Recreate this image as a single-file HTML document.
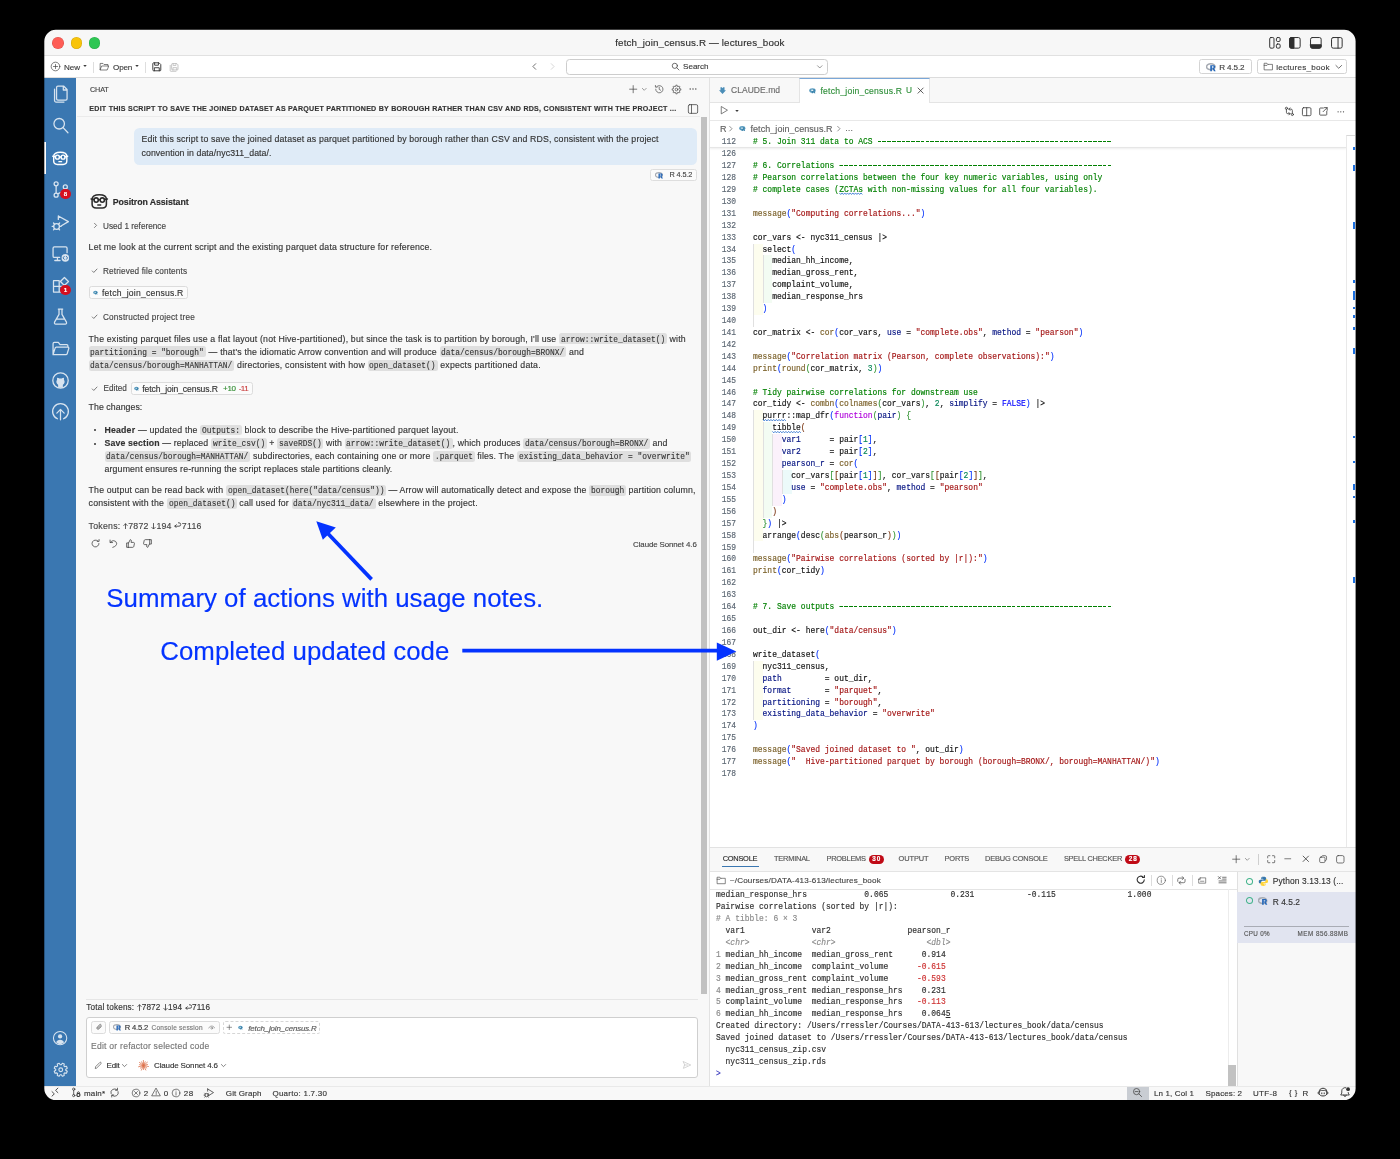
<!DOCTYPE html><html><head><meta charset="utf-8"><title>Positron</title><style>

html,body{margin:0;padding:0;background:#000;}
body{width:1400px;height:1159px;position:relative;overflow:hidden;font-family:"Liberation Sans",sans-serif;}
#w{position:absolute;left:0;top:0;width:1400px;height:1159px;overflow:hidden;will-change:transform;}
#w>div,#w>svg,#w>span,#w>pre{position:absolute;}
.t{white-space:pre;display:block;-webkit-text-stroke:0.14px currentColor;}
b{font-weight:700}
.c{background:#dfdfdf;border-radius:2.5px;font-size:6.5px;padding:2.2px 1.8px 1.7px 1.8px;}
.ci{display:inline-block;font:400 9.3px/9.6px "Liberation Mono",monospace;color:#333;letter-spacing:0;transform:scaleX(.85);transform-origin:0 50%;-webkit-text-stroke:0.12px currentColor;}
pre{margin:0;font:400 9.6px/11.92px "Liberation Mono",monospace;color:#111;white-space:pre;transform:scaleX(.8311);transform-origin:0 0;-webkit-text-stroke:0.17px currentColor;}
.dash{display:inline-block;height:0.95px;vertical-align:2.55px;background:repeating-linear-gradient(90deg,#008000 0,#008000 4.45px,transparent 4.45px,transparent 5.76px);}
.k{color:#008000}.s{color:#a31515}.f{color:#795e26}.v{color:#001080}.n{color:#098658}.b1{color:#0431fa}.b2{color:#319331}.b3{color:#7b3814}.kw{color:#af00db}.cn{color:#0000ff}
.g{color:#8a8a8a}.r{color:#cd3131}

</style></head><body><div id="w">
<div style="left:44px;top:29px;width:1312px;height:1072px;background:#f7f7f7;"></div>
<div style="left:44px;top:29px;width:1312px;height:27px;background:#f7f7f7;border-bottom:1px solid #e1e1e1;box-sizing:border-box;"></div>
<div style="left:52.300000000000004px;top:37.15px;width:11.6px;height:11.6px;background:#fe5d56;border-radius:50%;box-shadow:inset 0 0 0 0.6px rgba(0,0,0,0.13);"></div>
<div style="left:70.5px;top:37.15px;width:11.6px;height:11.6px;background:#f8c40a;border-radius:50%;box-shadow:inset 0 0 0 0.6px rgba(0,0,0,0.13);"></div>
<div style="left:88.8px;top:37.15px;width:11.6px;height:11.6px;background:#2dc653;border-radius:50%;box-shadow:inset 0 0 0 0.6px rgba(0,0,0,0.13);"></div>
<div style="left:44px;top:56px;width:1312px;height:22px;background:#ffffff;border-bottom:1px solid #dcdcdc;box-sizing:border-box;"></div>
<div style="left:44px;top:77.6px;width:32.3px;height:1009px;background:#3a77b1;"></div>
<div style="left:44.3px;top:142px;width:1.3px;height:31.5px;background:#ffffff;"></div>
<div style="left:76.3px;top:77.6px;width:633.7px;height:1009px;background:#f8f8f8;"></div>
<div style="left:700.6px;top:117.2px;width:6.5px;height:877px;background:#c1c1c1;"></div>
<div style="left:709px;top:78px;width:1px;height:1008px;background:#e2e2e2;"></div>
<div style="left:710px;top:78px;width:645.7px;height:770px;background:#ffffff;"></div>
<div style="left:710px;top:78px;width:645.7px;height:24.9px;background:#f8f8f8;border-bottom:1px solid #e4e4e4;box-sizing:border-box;"></div>
<div style="left:799.4px;top:78px;width:130.6px;height:24.9px;background:#ffffff;border-top:1.4px solid #7aa7d8;border-left:1px solid #e4e4e4;border-right:1px solid #e4e4e4;box-sizing:border-box;"></div>
<div style="left:710px;top:120px;width:645.7px;height:1px;background:#e8e8e8;"></div>
<div style="left:710px;top:147px;width:636px;height:1px;background:#e6e6e6;box-shadow:0 1px 2px rgba(0,0,0,.10);"></div>
<div style="left:1346px;top:135px;width:9px;height:712px;background:#ffffff;border-left:1px solid #e9e9e9;border-top:1px solid #d8d8d8;box-sizing:border-box;"></div>
<div style="left:1352.6px;top:147px;width:2.4px;height:3px;background:#1a6fe0;"></div>
<div style="left:1352.6px;top:164.7px;width:2.4px;height:6.3px;background:#1a6fe0;"></div>
<div style="left:1352.6px;top:221.9px;width:2.4px;height:6.8px;background:#1a6fe0;"></div>
<div style="left:1352.6px;top:280px;width:2.4px;height:2.5px;background:#1a6fe0;"></div>
<div style="left:1352.6px;top:290.8px;width:2.4px;height:9.2px;background:#1a6fe0;"></div>
<div style="left:1352.6px;top:306.8px;width:2.4px;height:2.5px;background:#1a6fe0;"></div>
<div style="left:1352.6px;top:315.2px;width:2.4px;height:2.5px;background:#1a6fe0;"></div>
<div style="left:1352.6px;top:327.3px;width:2.4px;height:2.5px;background:#1a6fe0;"></div>
<div style="left:1352.6px;top:347.6px;width:2.4px;height:6.4px;background:#1a6fe0;"></div>
<div style="left:1352.6px;top:435.8px;width:2.4px;height:2.5px;background:#1a6fe0;"></div>
<div style="left:1352.6px;top:460.5px;width:2.4px;height:2.5px;background:#1a6fe0;"></div>
<div style="left:1352.6px;top:484px;width:2.4px;height:6.4px;background:#1a6fe0;"></div>
<div style="left:1352.6px;top:495.5px;width:2.4px;height:2.5px;background:#1a6fe0;"></div>
<div style="left:1352.6px;top:520.3px;width:2.4px;height:2.5px;background:#1a6fe0;"></div>
<div style="left:1352.6px;top:577px;width:2.4px;height:6.4px;background:#1a6fe0;"></div>
<div style="left:710px;top:847px;width:645.7px;height:239px;background:#ffffff;border-top:1px solid #e2e2e2;box-sizing:border-box;"></div>
<div style="left:710px;top:848px;width:645.7px;height:24px;background:#f8f8f8;border-bottom:1px solid #e4e4e4;box-sizing:border-box;"></div>
<div style="left:710px;top:888.5px;width:527px;height:1px;background:#e4e4e4;"></div>
<div style="left:1236.5px;top:872px;width:119.2px;height:214px;background:#f8f8f8;border-left:1px solid #e0e0e0;box-sizing:border-box;"></div>
<div style="left:1236.6px;top:891.7px;width:119.1px;height:51px;background:#e1e4f0;"></div>
<div style="left:1227.5px;top:889px;width:1px;height:197px;background:#ececec;"></div>
<div style="left:1228.3px;top:1065px;width:7.6px;height:20.5px;background:#c2c2c2;"></div>
<div style="left:44px;top:1085.5px;width:1312px;height:15.5px;background:#f8f8f8;border-top:1px solid #e9e9e9;box-sizing:border-box;"></div>
<div style="left:1127.2px;top:1086.5px;width:21.5px;height:13.5px;background:#c9cdd3;"></div>
<span class="t" style="left:615.2px;top:36.34px;font:400 9.8px/13.72px 'Liberation Sans',sans-serif;color:#2e2e2e;letter-spacing:0.142px;">fetch_join_census.R — lectures_book</span>
<span class="t" style="left:64px;top:61.83px;font:400 8.1px/11.34px 'Liberation Sans',sans-serif;color:#3b3b3b;letter-spacing:-0.1px;">New</span>
<span class="t" style="left:113px;top:61.83px;font:400 8.1px/11.34px 'Liberation Sans',sans-serif;color:#3b3b3b;letter-spacing:-0.17px;">Open</span>
<div style="left:566.3px;top:59px;width:261.4px;height:16.3px;background:#ffffff;border:1px solid #cdcdcd;border-radius:3.5px;box-sizing:border-box;"></div>
<span class="t" style="left:683px;top:61.23px;font:400 8.1px/11.34px 'Liberation Sans',sans-serif;color:#3b3b3b;letter-spacing:-0.012px;">Search</span>
<div style="left:1199.3px;top:59.3px;width:52.5px;height:15px;background:#ffffff;border:1px solid #d4d4d4;border-radius:2.5px;box-sizing:border-box;"></div>
<div style="left:1257.3px;top:59.3px;width:89.5px;height:15px;background:#ffffff;border:1px solid #d4d4d4;border-radius:2.5px;box-sizing:border-box;"></div>
<span class="t" style="left:1219.3px;top:61.93px;font:400 8.1px/11.34px 'Liberation Sans',sans-serif;color:#3b3b3b;letter-spacing:-0.152px;">R 4.5.2</span>
<span class="t" style="left:1276.3px;top:61.93px;font:400 8.1px/11.34px 'Liberation Sans',sans-serif;color:#3b3b3b;letter-spacing:0.234px;">lectures_book</span>
<div style="left:93.2px;top:61.5px;width:1px;height:11px;background:#dedede;"></div>
<div style="left:145.4px;top:61.5px;width:1px;height:11px;background:#dedede;"></div>
<span class="t" style="left:90px;top:84.56px;font:400 7.2px/10.08px 'Liberation Sans',sans-serif;color:#444;letter-spacing:-0.113px;">CHAT</span>
<span class="t" style="left:89.3px;top:104.93px;font:700 7.1px/9.94px 'Liberation Sans',sans-serif;color:#333;letter-spacing:0.247px;">EDIT THIS SCRIPT TO SAVE THE JOINED DATASET AS PARQUET PARTITIONED BY BOROUGH RATHER THAN CSV AND RDS, CONSISTENT WITH THE PROJECT ...</span>
<div style="left:77px;top:116.3px;width:623px;height:1px;background:#ebebeb;"></div>
<div style="left:133.8px;top:128px;width:562.8px;height:36.6px;background:#dfebf7;border-radius:5.5px;"></div>
<span class="t" style="left:141.5px;top:133.47px;font:400 8.75px/12.25px 'Liberation Sans',sans-serif;color:#333;letter-spacing:0.143px;">Edit this script to save the joined dataset as parquet partitioned by borough rather than CSV and RDS, consistent with the project</span>
<span class="t" style="left:141.5px;top:146.68px;font:400 8.75px/12.25px 'Liberation Sans',sans-serif;color:#333;letter-spacing:0.071px;">convention in data/nyc311_data/.</span>
<div style="left:650.3px;top:168.5px;width:46.4px;height:12.8px;background:#fbfbfb;border:1px solid #dedede;border-radius:2.5px;box-sizing:border-box;"></div>
<span class="t" style="left:669.5px;top:169.89px;font:400 7.3px/10.22px 'Liberation Sans',sans-serif;color:#444;letter-spacing:-0.124px;">R 4.5.2</span>
<span class="t" style="left:112.8px;top:195.84px;font:700 8.8px/12.32px 'Liberation Sans',sans-serif;color:#2b2b2b;letter-spacing:-0.094px;">Positron Assistant</span>
<span class="t" style="left:103px;top:221.16px;font:400 8.2px/11.48px 'Liberation Sans',sans-serif;color:#444;letter-spacing:0.013px;">Used 1 reference</span>
<span class="t" style="left:88.6px;top:240.88px;font:400 8.75px/12.25px 'Liberation Sans',sans-serif;color:#333;letter-spacing:0.168px;">Let me look at the current script and the existing parquet data structure for reference.</span>
<span class="t" style="left:103px;top:265.86px;font:400 8.2px/11.48px 'Liberation Sans',sans-serif;color:#444;letter-spacing:0.136px;">Retrieved file contents</span>
<div style="left:89px;top:286px;width:99.3px;height:12.8px;background:#fbfbfb;border:1px solid #dcdcdc;border-radius:2.5px;box-sizing:border-box;"></div>
<span class="t" style="left:102px;top:286.58px;font:400 8.6px/12.04px 'Liberation Sans',sans-serif;color:#333;letter-spacing:0.211px;">fetch_join_census.R</span>
<span class="t" style="left:103px;top:311.86px;font:400 8.2px/11.48px 'Liberation Sans',sans-serif;color:#444;letter-spacing:0.192px;">Constructed project tree</span>
<span class="t" style="left:88.6px;top:332.68px;font:400 8.75px/12.25px 'Liberation Sans',sans-serif;color:#333;letter-spacing:0.178px;">The existing parquet files use a flat layout (not Hive-partitioned), but since the task is to partition by borough, I'll use <span class="c"><span class="ci" style="margin-right:-18.41px">arrow::write_dataset()</span></span> with</span>
<span class="t" style="left:88.6px;top:345.57px;font:400 8.75px/12.25px 'Liberation Sans',sans-serif;color:#333;letter-spacing:0.173px;"><span class="c"><span class="ci" style="margin-right:-20.09px">partitioning = &quot;borough&quot;</span></span> — that's the idiomatic Arrow convention and will produce <span class="c"><span class="ci" style="margin-right:-21.76px">data/census/borough=BRONX/</span></span> and</span>
<span class="t" style="left:88.6px;top:358.98px;font:400 8.75px/12.25px 'Liberation Sans',sans-serif;color:#333;letter-spacing:0.211px;"><span class="c"><span class="ci" style="margin-right:-25.11px">data/census/borough=MANHATTAN/</span></span> directories, consistent with how <span class="c"><span class="ci" style="margin-right:-11.72px">open_dataset()</span></span> expects partitioned data.</span>
<span class="t" style="left:103.5px;top:383.36px;font:400 8.2px/11.48px 'Liberation Sans',sans-serif;color:#444;letter-spacing:0.036px;">Edited</span>
<div style="left:130.5px;top:382.3px;width:122.1px;height:12.3px;background:#fbfbfb;border:1px solid #dcdcdc;border-radius:2.5px;box-sizing:border-box;"></div>
<span class="t" style="left:142.3px;top:382.88px;font:400 8.6px/12.04px 'Liberation Sans',sans-serif;color:#333;letter-spacing:-0.094px;">fetch_join_census.R</span>
<span class="t" style="left:223px;top:383.3px;font:400 8.0px/11.2px 'Liberation Sans',sans-serif;color:#2e8b2e;letter-spacing:-0.291px;">+10</span>
<span class="t" style="left:238.7px;top:383.3px;font:400 8.0px/11.2px 'Liberation Sans',sans-serif;color:#c93b3b;letter-spacing:-0.485px;">-11</span>
<span class="t" style="left:88.6px;top:400.77px;font:400 8.75px/12.25px 'Liberation Sans',sans-serif;color:#333;letter-spacing:0.061px;">The changes:</span>
<div style="left:94.2px;top:429.2px;width:2.2px;height:2.2px;background:#333;border-radius:50%;"></div>
<div style="left:94.2px;top:442.6px;width:2.2px;height:2.2px;background:#333;border-radius:50%;"></div>
<span class="t" style="left:104.5px;top:423.77px;font:400 8.75px/12.25px 'Liberation Sans',sans-serif;color:#333;letter-spacing:0.182px;"><b>Header</b> — updated the <span class="c"><span class="ci" style="margin-right:-6.7px">Outputs:</span></span> block to describe the Hive-partitioned parquet layout.</span>
<span class="t" style="left:104.5px;top:437.07px;font:400 8.75px/12.25px 'Liberation Sans',sans-serif;color:#333;letter-spacing:0.139px;"><b>Save section</b> — replaced <span class="c"><span class="ci" style="margin-right:-9.21px">write_csv()</span></span> + <span class="c"><span class="ci" style="margin-right:-7.53px">saveRDS()</span></span> with <span class="c"><span class="ci" style="margin-right:-18.41px">arrow::write_dataset()</span></span>, which produces <span class="c"><span class="ci" style="margin-right:-21.76px">data/census/borough=BRONX/</span></span> and</span>
<span class="t" style="left:104.5px;top:449.98px;font:400 8.75px/12.25px 'Liberation Sans',sans-serif;color:#333;letter-spacing:0.168px;"><span class="c"><span class="ci" style="margin-right:-25.11px">data/census/borough=MANHATTAN/</span></span> subdirectories, each containing one or more <span class="c"><span class="ci" style="margin-right:-6.7px">.parquet</span></span> files. The <span class="c"><span class="ci" style="margin-right:-30.13px">existing_data_behavior = &quot;overwrite&quot;</span></span></span>
<span class="t" style="left:104.5px;top:462.88px;font:400 8.75px/12.25px 'Liberation Sans',sans-serif;color:#333;letter-spacing:0.156px;">argument ensures re-running the script replaces stale partitions cleanly.</span>
<span class="t" style="left:88.6px;top:484.18px;font:400 8.75px/12.25px 'Liberation Sans',sans-serif;color:#333;letter-spacing:0.164px;">The output can be read back with <span class="c"><span class="ci" style="margin-right:-27.62px">open_dataset(here(&quot;data/census&quot;))</span></span> — Arrow will automatically detect and expose the <span class="c"><span class="ci" style="margin-right:-5.86px">borough</span></span> partition column,</span>
<span class="t" style="left:88.6px;top:496.98px;font:400 8.75px/12.25px 'Liberation Sans',sans-serif;color:#333;letter-spacing:0.185px;">consistent with the <span class="c"><span class="ci" style="margin-right:-11.72px">open_dataset()</span></span> call used for <span class="c"><span class="ci" style="margin-right:-14.23px">data/nyc311_data/</span></span> elsewhere in the project.</span>
<span class="t" style="left:88.6px;top:519.88px;font:400 8.75px/12.25px 'Liberation Sans',sans-serif;color:#444;letter-spacing:0.252px;">Tokens: <svg width="5" height="6.8" viewBox="0 0 5 7.6" style="vertical-align:-0.5px"><path d="M2.5 7.2V0.9M0.6 2.800L2.500 0.900 4.400 2.800" stroke="#3a3a3a" stroke-width="0.9" fill="none" stroke-linecap="round" stroke-linejoin="round"/></svg>7872 <svg width="5" height="6.8" viewBox="0 0 5 7.6" style="vertical-align:-0.5px"><path d="M2.5 0.500V6.800M0.600 4.900L2.500 6.800 4.400 4.900" stroke="#3a3a3a" stroke-width="0.9" fill="none" stroke-linecap="round" stroke-linejoin="round"/></svg>194 <svg width="7.4" height="6" viewBox="0 0 7.4 6" style="vertical-align:0.6px"><path d="M0.800 4.200H5a1.700 1.700 0 0 0 0-3.400H4.400M2.300 2.700L0.800 4.200 2.300 5.600" stroke="#3a3a3a" stroke-width="0.85" fill="none" stroke-linecap="round" stroke-linejoin="round"/></svg>7116</span>
<span class="t" style="right:703.3px;top:538.77px;font:400 7.9px/11.06px 'Liberation Sans',sans-serif;color:#444;letter-spacing:-0.105px;">Claude Sonnet 4.6</span>
<span class="t" style="left:106.3px;top:583.0px;font:400 25.85px/30px 'Liberation Sans',sans-serif;color:#0433ff;letter-spacing:0.009px;">Summary of actions with usage notes.</span>
<span class="t" style="left:160.3px;top:636.4px;font:400 25.85px/30px 'Liberation Sans',sans-serif;color:#0433ff;letter-spacing:0.009px;">Completed updated code</span>
<svg style="left:300px;top:510px;z-index:5" width="90" height="80" viewBox="300 510 90 80"><line x1="371.6" y1="579.4" x2="326" y2="531.5" stroke="#0433ff" stroke-width="3.7"/><polygon points="316.3,521.3 335.8,527.5 322.8,539.8" fill="#0433ff"/></svg>
<svg style="left:455px;top:635px;z-index:5" width="290" height="30" viewBox="455 635 290 30"><line x1="462.3" y1="650.6" x2="720" y2="650.6" stroke="#0433ff" stroke-width="3.7"/><polygon points="736.3,651.4 716.8,642.4 716.8,660.8" fill="#0433ff"/></svg>
<div style="left:86.3px;top:999.3px;width:612px;height:1px;background:#e6e6e6;"></div>
<span class="t" style="left:86.3px;top:1002.26px;font:400 8.2px/11.48px 'Liberation Sans',sans-serif;color:#333;letter-spacing:0.154px;">Total tokens: <svg width="5" height="6.8" viewBox="0 0 5 7.6" style="vertical-align:-0.5px"><path d="M2.5 7.2V0.9M0.6 2.800L2.500 0.900 4.400 2.800" stroke="#3a3a3a" stroke-width="0.9" fill="none" stroke-linecap="round" stroke-linejoin="round"/></svg>7872 <svg width="5" height="6.8" viewBox="0 0 5 7.6" style="vertical-align:-0.5px"><path d="M2.5 0.500V6.800M0.600 4.900L2.500 6.800 4.400 4.900" stroke="#3a3a3a" stroke-width="0.9" fill="none" stroke-linecap="round" stroke-linejoin="round"/></svg>194 <svg width="7.4" height="6" viewBox="0 0 7.4 6" style="vertical-align:0.6px"><path d="M0.800 4.200H5a1.700 1.700 0 0 0 0-3.400H4.400M2.300 2.700L0.800 4.200 2.300 5.600" stroke="#3a3a3a" stroke-width="0.85" fill="none" stroke-linecap="round" stroke-linejoin="round"/></svg>7116</span>
<div style="left:86.3px;top:1016.6px;width:612.2px;height:61px;background:#ffffff;border:1px solid #cfcfcf;border-radius:3px;box-sizing:border-box;"></div>
<div style="left:91px;top:1021px;width:15.2px;height:12.6px;background:#fbfbfb;border:1px solid #dcdcdc;border-radius:2.5px;box-sizing:border-box;"></div>
<div style="left:109.4px;top:1021px;width:110.3px;height:12.6px;background:#fbfbfb;border:1px solid #dcdcdc;border-radius:2.5px;box-sizing:border-box;"></div>
<div style="left:223.2px;top:1021px;width:97.2px;height:12.6px;background:#ffffff;border:1px dashed #d6d6d6;border-radius:2.5px;box-sizing:border-box;"></div>
<span class="t" style="left:124.7px;top:1022.58px;font:400 7.6px/10.64px 'Liberation Sans',sans-serif;color:#333;letter-spacing:-0.166px;">R 4.5.2</span>
<span class="t" style="left:151.5px;top:1022.85px;font:400 6.5px/9.1px 'Liberation Sans',sans-serif;color:#777;letter-spacing:0.236px;">Console session</span>
<span class="t" style="left:248.3px;top:1022.77px;font:400 7.9px/11.06px 'Liberation Sans',sans-serif;color:#555;letter-spacing:-0.142px;font-style:italic;">fetch_join_census.R</span>
<span class="t" style="left:91px;top:1040.28px;font:400 8.6px/12.04px 'Liberation Sans',sans-serif;color:#767676;letter-spacing:0.228px;">Edit or refactor selected code</span>
<span class="t" style="left:106.5px;top:1060.0px;font:400 8.0px/11.2px 'Liberation Sans',sans-serif;color:#333;letter-spacing:-0.199px;">Edit</span>
<span class="t" style="left:154px;top:1060.0px;font:400 8.0px/11.2px 'Liberation Sans',sans-serif;color:#333;letter-spacing:-0.143px;">Claude Sonnet 4.6</span>
<span class="t" style="left:84px;top:1087.7px;font:400 8.0px/11.2px 'Liberation Sans',sans-serif;color:#333;letter-spacing:0.136px;">main*</span>
<span class="t" style="left:143.8px;top:1087.7px;font:400 8.0px/11.2px 'Liberation Sans',sans-serif;color:#333;">2</span>
<span class="t" style="left:163.8px;top:1087.7px;font:400 8.0px/11.2px 'Liberation Sans',sans-serif;color:#333;">0</span>
<span class="t" style="left:183.7px;top:1087.7px;font:400 8.0px/11.2px 'Liberation Sans',sans-serif;color:#333;letter-spacing:0.699px;">28</span>
<span class="t" style="left:225.8px;top:1087.7px;font:400 8.0px/11.2px 'Liberation Sans',sans-serif;color:#333;letter-spacing:0.127px;">Git Graph</span>
<span class="t" style="left:272.4px;top:1087.7px;font:400 8.0px/11.2px 'Liberation Sans',sans-serif;color:#333;letter-spacing:0.265px;">Quarto: 1.7.30</span>
<span class="t" style="left:1153.9px;top:1087.7px;font:400 8.0px/11.2px 'Liberation Sans',sans-serif;color:#333;letter-spacing:0.14px;">Ln 1, Col 1</span>
<span class="t" style="left:1205.6px;top:1087.7px;font:400 8.0px/11.2px 'Liberation Sans',sans-serif;color:#333;letter-spacing:0.101px;">Spaces: 2</span>
<span class="t" style="left:1252.9px;top:1087.7px;font:400 8.0px/11.2px 'Liberation Sans',sans-serif;color:#333;letter-spacing:0.355px;">UTF-8</span>
<span class="t" style="left:1302.4px;top:1087.7px;font:400 8.0px/11.2px 'Liberation Sans',sans-serif;color:#333;">R</span>
<span class="t" style="left:731px;top:85.25px;font:400 8.5px/11.9px 'Liberation Sans',sans-serif;color:#6a6a6a;letter-spacing:0.043px;">CLAUDE.md</span>
<span class="t" style="left:820.5px;top:84.78px;font:400 8.6px/12.04px 'Liberation Sans',sans-serif;color:#2f8f3a;letter-spacing:0.228px;">fetch_join_census.R</span>
<span class="t" style="left:906.0px;top:85.19px;font:400 8.3px/11.62px 'Liberation Sans',sans-serif;color:#2f8f3a;">U</span>
<span class="t" style="left:720px;top:122.9px;font:400 9.0px/12.6px 'Liberation Sans',sans-serif;color:#616161;">R</span>
<span class="t" style="left:750.5px;top:122.8px;font:400 9.0px/12.6px 'Liberation Sans',sans-serif;color:#616161;letter-spacing:0.052px;">fetch_join_census.R</span>
<span class="t" style="left:845px;top:123.36px;font:400 8.2px/11.48px 'Liberation Sans',sans-serif;color:#616161;">…</span>
<div style="left:753.3px;top:243.5px;width:9.56px;height:71.52px;background:#fdfdee;"></div>
<div style="left:762.86px;top:255.42px;width:9.56px;height:47.68px;background:#f3fcf3;"></div>
<div style="left:753.3px;top:410.38px;width:9.56px;height:131.12px;background:#fdfdee;"></div>
<div style="left:762.86px;top:422.3px;width:9.56px;height:95.36px;background:#f3fcf3;"></div>
<div style="left:772.43px;top:434.22px;width:9.56px;height:71.52px;background:#fbf1fb;"></div>
<div style="left:781.99px;top:469.98px;width:9.56px;height:23.84px;background:#ecfafa;"></div>
<div style="left:753.3px;top:660.7px;width:9.56px;height:59.6px;background:#fdfdee;"></div>
<div style="left:753.3px;top:243.5px;width:0.8px;height:83.44px;background:#e0e0e0;"></div>
<div style="left:762.86px;top:255.42px;width:0.8px;height:47.68px;background:#e0e0e0;"></div>
<div style="left:753.3px;top:410.38px;width:0.8px;height:143.04px;background:#e0e0e0;"></div>
<div style="left:762.86px;top:422.3px;width:0.8px;height:95.36px;background:#e0e0e0;"></div>
<div style="left:772.43px;top:434.22px;width:0.8px;height:71.52px;background:#e0e0e0;"></div>
<div style="left:781.99px;top:469.98px;width:0.8px;height:23.84px;background:#e0e0e0;"></div>
<div style="left:753.3px;top:660.7px;width:0.8px;height:59.6px;background:#e0e0e0;"></div>
<pre style="left:753.3px;top:136.34px;"><span class="k"># 5. Join 311 data to ACS <span class="dash" style="width:282.24px"></span></span></pre>
<pre style="left:753.3px;top:148.14px;">

<span class="k"># 6. Correlations <span class="dash" style="width:328.32px"></span></span>
<span class="k"># Pearson correlations between the four key numeric variables, using only</span>
<span class="k"># complete cases (ZCTAs with non-missing values for all four variables).</span>

<span class="f">message</span><span class="b1">(</span><span class="s">&quot;Computing correlations...&quot;</span><span class="b1">)</span>

cor_vars &lt;- nyc311_census |&gt;
  select<span class="b1">(</span>
    median_hh_income,
    median_gross_rent,
    complaint_volume,
    median_response_hrs
  <span class="b1">)</span>

cor_matrix &lt;- <span class="f">cor</span><span class="b1">(</span>cor_vars, <span class="v">use</span> = <span class="s">&quot;complete.obs&quot;</span>, <span class="v">method</span> = <span class="s">&quot;pearson&quot;</span><span class="b1">)</span>

<span class="f">message</span><span class="b1">(</span><span class="s">&quot;Correlation matrix (Pearson, complete observations):&quot;</span><span class="b1">)</span>
<span class="f">print</span><span class="b1">(</span><span class="f">round</span><span class="b2">(</span>cor_matrix, <span class="n">3</span><span class="b2">)</span><span class="b1">)</span>

<span class="k"># Tidy pairwise correlations for downstream use</span>
cor_tidy &lt;- <span class="f">combn</span><span class="b1">(</span><span class="f">colnames</span><span class="b2">(</span>cor_vars<span class="b2">)</span>, <span class="n">2</span>, <span class="v">simplify</span> = <span class="cn">FALSE</span><span class="b1">)</span> |&gt;
  purrr::map_dfr<span class="b1">(</span><span class="kw">function</span><span class="b2">(</span><span class="v">pair</span><span class="b2">)</span> <span class="b2">{</span>
    tibble<span class="b3">(</span>
      <span class="v">var1</span>      = pair<span class="b1">[</span><span class="n">1</span><span class="b1">]</span>,
      <span class="v">var2</span>      = pair<span class="b1">[</span><span class="n">2</span><span class="b1">]</span>,
      <span class="v">pearson_r</span> = <span class="f">cor</span><span class="b1">(</span>
        cor_vars<span class="b2">[</span><span class="b3">[</span>pair<span class="b1">[</span><span class="n">1</span><span class="b1">]</span><span class="b3">]</span><span class="b2">]</span>, cor_vars<span class="b2">[</span><span class="b3">[</span>pair<span class="b1">[</span><span class="n">2</span><span class="b1">]</span><span class="b3">]</span><span class="b2">]</span>,
        <span class="v">use</span> = <span class="s">&quot;complete.obs&quot;</span>, <span class="v">method</span> = <span class="s">&quot;pearson&quot;</span>
      <span class="b1">)</span>
    <span class="b3">)</span>
  <span class="b2">}</span><span class="b1">)</span> |&gt;
  arrange<span class="b1">(</span>desc<span class="b2">(</span><span class="f">abs</span><span class="b3">(</span>pearson_r<span class="b3">)</span><span class="b2">)</span><span class="b1">)</span>

<span class="f">message</span><span class="b1">(</span><span class="s">&quot;Pairwise correlations (sorted by |r|):&quot;</span><span class="b1">)</span>
<span class="f">print</span><span class="b1">(</span>cor_tidy<span class="b1">)</span>


<span class="k"># 7. Save outputs <span class="dash" style="width:328.32px"></span></span>

out_dir &lt;- here<span class="b1">(</span><span class="s">&quot;data/census&quot;</span><span class="b1">)</span>

write_dataset<span class="b1">(</span>
  nyc311_census,
  <span class="v">path</span>         = out_dir,
  <span class="v">format</span>       = <span class="s">&quot;parquet&quot;</span>,
  <span class="v">partitioning</span> = <span class="s">&quot;borough&quot;</span>,
  <span class="v">existing_data_behavior</span> = <span class="s">&quot;overwrite&quot;</span>
<span class="b1">)</span>

<span class="f">message</span><span class="b1">(</span><span class="s">&quot;Saved joined dataset to &quot;</span>, out_dir<span class="b1">)</span>
<span class="f">message</span><span class="b1">(</span><span class="s">&quot;  Hive-partitioned parquet by borough (borough=BRONX/, borough=MANHATTAN/)&quot;</span><span class="b1">)</span>
</pre>
<pre style="left:714.8px;width:25.27px;text-align:right;top:136.34px;color:#5c6773;">112</pre>
<pre style="left:714.8px;width:25.27px;text-align:right;top:148.14px;color:#5c6773;">126
127
128
129
130
131
132
133
134
135
136
137
138
139
140
141
142
143
144
145
146
147
148
149
150
151
152
153
154
155
156
157
158
159
160
161
162
163
164
165
166
167
168
169
170
171
172
173
174
175
176
177
178</pre>
<span class="t" style="left:722.7px;top:853.78px;font:400 7.45px/10.43px 'Liberation Sans',sans-serif;color:#2b2b2b;letter-spacing:-0.263px;">CONSOLE</span>
<span class="t" style="left:774px;top:853.78px;font:400 7.45px/10.43px 'Liberation Sans',sans-serif;color:#555;letter-spacing:-0.23px;">TERMINAL</span>
<span class="t" style="left:826.5px;top:853.78px;font:400 7.45px/10.43px 'Liberation Sans',sans-serif;color:#555;letter-spacing:-0.263px;">PROBLEMS</span>
<span class="t" style="left:898.5px;top:853.78px;font:400 7.45px/10.43px 'Liberation Sans',sans-serif;color:#555;letter-spacing:-0.095px;">OUTPUT</span>
<span class="t" style="left:944.6px;top:853.78px;font:400 7.45px/10.43px 'Liberation Sans',sans-serif;color:#555;letter-spacing:-0.225px;">PORTS</span>
<span class="t" style="left:985px;top:853.78px;font:400 7.45px/10.43px 'Liberation Sans',sans-serif;color:#555;letter-spacing:-0.174px;">DEBUG CONSOLE</span>
<span class="t" style="left:1063.9px;top:853.78px;font:400 7.45px/10.43px 'Liberation Sans',sans-serif;color:#555;letter-spacing:-0.243px;">SPELL CHECKER</span>
<div style="left:721.5px;top:866.3px;width:37.3px;height:1px;background:#3a77b1;"></div>
<div style="left:868.5px;top:854.5px;width:15.5px;height:9.8px;background:#c00a16;border-radius:5px;"></div>
<div style="left:1125.4px;top:854.5px;width:14.6px;height:9.8px;background:#c00a16;border-radius:5px;"></div>
<span class="t" style="left:872.2px;top:854.92px;font:700 6.4px/8.96px 'Liberation Sans',sans-serif;color:#fff;letter-spacing:1.081px;">30</span>
<span class="t" style="left:1128.7px;top:854.92px;font:700 6.4px/8.96px 'Liberation Sans',sans-serif;color:#fff;letter-spacing:0.891px;">28</span>
<span class="t" style="left:729.8px;top:874.53px;font:400 8.1px/11.34px 'Liberation Sans',sans-serif;color:#444;letter-spacing:0.177px;">~/Courses/DATA-413-613/lectures_book</span>
<pre style="left:716.2px;top:889.14px;color:#2e2e2e;">median_response_hrs            0.065             0.231           -0.115               1.000
Pairwise correlations (sorted by |r|):
<span class="g"># A tibble: 6 × 3</span>
  var1              var2                pearson_r
  <span class="g"><i>&lt;chr&gt;</i></span>             <span class="g"><i>&lt;chr&gt;</i></span>                   <span class="g"><i>&lt;dbl&gt;</i></span>
<span class="g">1</span> median_hh_income  median_gross_rent      0.914
<span class="g">2</span> median_hh_income  complaint_volume      <span class="r">-0.615</span>
<span class="g">3</span> median_gross_rent complaint_volume      <span class="r">-0.593</span>
<span class="g">4</span> median_gross_rent median_response_hrs    0.231
<span class="g">5</span> complaint_volume  median_response_hrs   <span class="r">-0.113</span>
<span class="g">6</span> median_hh_income  median_response_hrs    0.064<u>5</u>
Created directory: /Users/rressler/Courses/DATA-413-613/lectures_book/data/census
Saved joined dataset to /Users/rressler/Courses/DATA-413-613/lectures_book/data/census
  nyc311_census_zip.csv
  nyc311_census_zip.rds
<span style="color:#3e3ebf">&gt;</span></pre>
<span class="t" style="left:1272.7px;top:876.22px;font:400 8.4px/11.76px 'Liberation Sans',sans-serif;color:#333;letter-spacing:0.125px;">Python 3.13.13 (...</span>
<span class="t" style="left:1272.7px;top:896.52px;font:400 8.4px/11.76px 'Liberation Sans',sans-serif;color:#333;letter-spacing:0.048px;">R 4.5.2</span>
<div style="left:1244.4px;top:925.5px;width:104.6px;height:1px;background:#a9acb5;"></div>
<span class="t" style="left:1244px;top:929.79px;font:400 6.3px/8.82px 'Liberation Sans',sans-serif;color:#555;letter-spacing:0.289px;">CPU 0%</span>
<span class="t" style="left:1297.6px;top:929.79px;font:400 6.3px/8.82px 'Liberation Sans',sans-serif;color:#555;letter-spacing:0.477px;">MEM 856.88MB</span>
<svg style="left:0;top:0" width="1400" height="1159" viewBox="0 0 1400 1159"><polyline points="839.38,192.96 840.73,194.46 842.08,192.96 843.43,194.46 844.78,192.96 846.13,194.46 847.48,192.96 848.83,194.46 850.18,192.96 851.53,194.46 852.88,192.96 854.23,194.46 855.58,192.96 856.93,194.46 858.28,192.96 859.63,194.46 860.98,192.96 862.33,194.46" fill="none" stroke="#2f74d0" stroke-width="0.85"/></svg>
<svg style="left:0;top:0" width="1400" height="1159" viewBox="0 0 1400 1159"><polyline points="762.86,419.44 764.21,420.94 765.56,419.44 766.91,420.94 768.26,419.44 769.61,420.94 770.96,419.44 772.31,420.94 773.66,419.44 775.01,420.94 776.36,419.44 777.71,420.94 779.06,419.44 780.41,420.94 781.76,419.44 783.11,420.94 784.46,419.44 785.81,420.94" fill="none" stroke="#2f74d0" stroke-width="0.85"/></svg>
<svg style="left:0;top:0" width="1400" height="1159" viewBox="0 0 1400 1159"><polyline points="772.43,431.36 773.78,432.86 775.13,431.36 776.48,432.86 777.83,431.36 779.18,432.86 780.53,431.36 781.88,432.86 783.23,431.36 784.58,432.86 785.93,431.36 787.28,432.86 788.63,431.36 789.98,432.86 791.33,431.36 792.68,432.86 794.03,431.36 795.38,432.86 796.73,431.36 798.08,432.86 799.43,431.36 800.78,432.86" fill="none" stroke="#2f74d0" stroke-width="0.85"/></svg>
<svg style="left:1267.85px;top:36.2px;" width="13.7" height="13.7" viewBox="0 0 16 16" fill="none" stroke="#2f2f2f" stroke-width="1.15" stroke-linecap="round" stroke-linejoin="round"><g color="#2f2f2f"><rect x="2" y="1.8" width="5" height="12.4" rx="1.4"/><rect x="9.8" y="1.8" width="4.4" height="4.6" rx="1.4"/><rect x="9.8" y="9.4" width="4.4" height="4.8" rx="1.4"/></g></svg>
<svg style="left:1288.35px;top:36.2px;" width="13.7" height="13.7" viewBox="0 0 16 16" fill="none" stroke="#2f2f2f" stroke-width="1.15" stroke-linecap="round" stroke-linejoin="round"><g color="#2f2f2f"><rect x="1.8" y="1.8" width="12.4" height="12.4" rx="2"/><path d="M1.8 3.8a2 2 0 0 1 2-2H7v12.4H3.8a2 2 0 0 1-2-2z" fill="currentColor"/></g></svg>
<svg style="left:1309.15px;top:36.2px;" width="13.7" height="13.7" viewBox="0 0 16 16" fill="none" stroke="#2f2f2f" stroke-width="1.15" stroke-linecap="round" stroke-linejoin="round"><g color="#2f2f2f"><rect x="1.8" y="1.8" width="12.4" height="12.4" rx="2"/><path d="M1.8 10.2h12.4v2a2 2 0 0 1-2 2H3.8a2 2 0 0 1-2-2z" fill="currentColor"/></g></svg>
<svg style="left:1329.85px;top:36.2px;" width="13.7" height="13.7" viewBox="0 0 16 16" fill="none" stroke="#2f2f2f" stroke-width="1.15" stroke-linecap="round" stroke-linejoin="round"><g color="#2f2f2f"><rect x="1.8" y="1.8" width="12.4" height="12.4" rx="2"/><path d="M9.4 1.8v12.4"/></g></svg>
<svg style="left:50.1px;top:61.2px;" width="11" height="11" viewBox="0 0 16 16" fill="none" stroke="#3c3c3c" stroke-width="0.95" stroke-linecap="round" stroke-linejoin="round"><g color="#3c3c3c"><circle cx="8" cy="8" r="6.3"/><path d="M8 5v6M5 8h6"/></g></svg>
<svg style="left:81.4px;top:62.4px;" width="8" height="8" viewBox="0 0 16 16" fill="none" stroke="#3c3c3c" stroke-width="1.0" stroke-linecap="round" stroke-linejoin="round"><g color="#3c3c3c"><path d="M4.5 6.2h7L8 10.2z" fill="currentColor" stroke="none"/></g></svg>
<svg style="left:98.6px;top:61.1px;" width="10.8" height="10.8" viewBox="0 0 16 16" fill="none" stroke="#3c3c3c" stroke-width="0.95" stroke-linecap="round" stroke-linejoin="round"><g color="#3c3c3c"><path d="M1.7 12.8V3.6h4.2l1.6 1.6h5.8v2.2M1.7 12.8l2.2-5.4h10.6l-2.2 5.4z"/></g></svg>
<svg style="left:133.4px;top:62.4px;" width="8" height="8" viewBox="0 0 16 16" fill="none" stroke="#3c3c3c" stroke-width="1.0" stroke-linecap="round" stroke-linejoin="round"><g color="#3c3c3c"><path d="M4.5 6.2h7L8 10.2z" fill="currentColor" stroke="none"/></g></svg>
<svg style="left:150.8px;top:60.9px;" width="11.6" height="11.6" viewBox="0 0 16 16" fill="none" stroke="#2f2f2f" stroke-width="1.25" stroke-linecap="round" stroke-linejoin="round"><g color="#2f2f2f"><path d="M2.5 3.5a1 1 0 0 1 1-1h7.6l2.4 2.4v7.6a1 1 0 0 1-1 1h-9a1 1 0 0 1-1-1zM5 2.5v3.3h5.2V2.5M4.6 13.5V9.3h6.8v4.2"/></g></svg>
<svg style="left:167.7px;top:60.9px;" width="11.6" height="11.6" viewBox="0 0 16 16" fill="none" stroke="#b9b9b9" stroke-width="1.1" stroke-linecap="round" stroke-linejoin="round"><g color="#b9b9b9"><path d="M5 4.5a1 1 0 0 1 1-1h6l1.8 1.8v6a1 1 0 0 1-1 1H6a1 1 0 0 1-1-1zM7 3.5v2.6h4V3.5M6.8 12.3V9.2h5.3v3.1M3 6v7.2a1 1 0 0 0 1 1h7"/></g></svg>
<svg style="left:530.2px;top:61.8px;" width="9" height="9" viewBox="0 0 16 16" fill="none" stroke="#3c3c3c" stroke-width="1.3" stroke-linecap="round" stroke-linejoin="round"><g color="#3c3c3c"><path d="M10.2 3L5.2 8l5 5"/></g></svg>
<svg style="left:548.1px;top:61.8px;" width="9" height="9" viewBox="0 0 16 16" fill="none" stroke="#c2c2c2" stroke-width="1.2" stroke-linecap="round" stroke-linejoin="round"><g color="#c2c2c2"><path d="M5.8 3l5 5-5 5"/></g></svg>
<svg style="left:670.7px;top:61.6px;" width="9" height="9" viewBox="0 0 16 16" fill="none" stroke="#3c3c3c" stroke-width="1.3" stroke-linecap="round" stroke-linejoin="round"><g color="#3c3c3c"><circle cx="6.8" cy="6.8" r="4.6"/><path d="M10.2 10.2L14.2 14.2"/></g></svg>
<svg style="left:815.85px;top:62.55px;" width="7.5" height="7.5" viewBox="0 0 16 16" fill="none" stroke="#555" stroke-width="1.3" stroke-linecap="round" stroke-linejoin="round"><g color="#555"><path d="M3.2 5.8L8 10.6l4.8-4.8"/></g></svg>
<svg style="left:1205.9px;top:61.7px" width="11" height="11" viewBox="0 0 16 16"><ellipse cx="7" cy="7" rx="6.200" ry="4.300" fill="none" stroke="#a6abb3" stroke-width="2.200"/><path d="M6.200 4.600h4.200c2 0 3 .9 3 2.300 0 1.100-.7 1.900-1.700 2.200l2.400 4.300h-2.600l-2-3.900H8.600v3.900H6.200zM8.600 6.300v1.900h1.500c.7 0 1.100-.4 1.100-1s-.4-.9-1.100-.9z" fill="#2366b8"/></svg>
<svg style="left:1262.7px;top:61.2px;" width="10.6" height="10.6" viewBox="0 0 16 16" fill="none" stroke="#3c3c3c" stroke-width="0.95" stroke-linecap="round" stroke-linejoin="round"><g color="#3c3c3c"><path d="M1.7 12.8V3.4h4.3l1.5 1.7h6.8v7.7zM1.7 6.6h4.4l1.4-1.5"/></g></svg>
<svg style="left:1333.75px;top:62.25px;" width="9.5" height="9.5" viewBox="0 0 16 16" fill="none" stroke="#444" stroke-width="1.3" stroke-linecap="round" stroke-linejoin="round"><g color="#444"><path d="M3.2 5.8L8 10.6l4.8-4.8"/></g></svg>
<svg style="left:49.9px;top:82.6px;opacity:0.8;" width="21" height="21" viewBox="0 0 24 24" fill="none" stroke="#ffffff" stroke-width="1.45" stroke-linecap="round" stroke-linejoin="round"><g color="#ffffff"><path d="M9 3.500h6.500l4 4V18a1.500 1.500 0 0 1-1.500 1.500H9A1.500 1.500 0 0 1 7.500 18V5A1.500 1.500 0 0 1 9 3.500zM15.200 3.800V8h4.200"/><path d="M5.200 7v13a1.800 1.800 0 0 0 1.800 1.800h9"/></g></svg>
<svg style="left:49.9px;top:115.1px;opacity:0.8;" width="21" height="21" viewBox="0 0 24 24" fill="none" stroke="#ffffff" stroke-width="1.45" stroke-linecap="round" stroke-linejoin="round"><g color="#ffffff"><circle cx="10.500" cy="10" r="6"/><path d="M15 14.500l5.500 5.800"/></g></svg>
<svg style="left:49.9px;top:179.3px;opacity:0.8;" width="21" height="21" viewBox="0 0 24 24" fill="none" stroke="#ffffff" stroke-width="1.45" stroke-linecap="round" stroke-linejoin="round"><g color="#ffffff"><circle cx="7" cy="5.500" r="2.300"/><circle cx="7" cy="18.500" r="2.300"/><circle cx="17.500" cy="9" r="2.300"/><path d="M7 7.800v8.400M17.500 11.300c0 3.200-4.500 3.700-8.300 5.500"/></g></svg>
<svg style="left:49.9px;top:211.7px;opacity:0.8;" width="21" height="21" viewBox="0 0 24 24" fill="none" stroke="#ffffff" stroke-width="1.45" stroke-linecap="round" stroke-linejoin="round"><g color="#ffffff"><path d="M9.500 4.500L21 11l-8 4.800M9.500 4.500v4"/><circle cx="7.500" cy="16.500" r="3.300"/><path d="M2.500 16.500h1.700M10.800 16.500h1.700M4 12.600l1.300 1.400M11 12.600l-1.300 1.400M4 20.400l1.300-1.400M11 20.400l-1.300-1.400"/></g></svg>
<svg style="left:49.9px;top:243.1px;opacity:0.8;" width="21" height="21" viewBox="0 0 24 24" fill="none" stroke="#ffffff" stroke-width="1.45" stroke-linecap="round" stroke-linejoin="round"><g color="#ffffff"><path d="M19.500 11V6a1.500 1.500 0 0 0-1.500-1.500H5A1.500 1.500 0 0 0 3.500 6v9A1.500 1.500 0 0 0 5 16.500h6M5.500 20h6M8.500 16.500V20"/><circle cx="17.500" cy="17" r="4.300" fill="currentColor" stroke="none"/><path d="M16.300 15.300L14.900 17l1.400 1.700M18.700 15.300l1.400 1.700-1.400 1.700" stroke="#3a77b1" stroke-width="1.100"/></g></svg>
<svg style="left:49.9px;top:274.8px;opacity:0.8;" width="21" height="21" viewBox="0 0 24 24" fill="none" stroke="#ffffff" stroke-width="1.45" stroke-linecap="round" stroke-linejoin="round"><g color="#ffffff"><path d="M4 6.500h6.500V13H4zM4 13h6.500v6.500H4zM10.500 13H17v6.500h-6.500z"/><path d="M16.500 2.800l4.600 4.600-4.600 4.600-4.600-4.600z"/></g></svg>
<svg style="left:49.9px;top:306.1px;opacity:0.8;" width="21" height="21" viewBox="0 0 24 24" fill="none" stroke="#ffffff" stroke-width="1.45" stroke-linecap="round" stroke-linejoin="round"><g color="#ffffff"><path d="M9.500 3.500h5M10.300 3.500v6L5.200 18.500a1.500 1.500 0 0 0 1.300 2.200h11a1.500 1.500 0 0 0 1.300-2.200L13.700 9.500v-6M7.300 15h9.400"/></g></svg>
<svg style="left:49.9px;top:337.7px;opacity:0.8;" width="21" height="21" viewBox="0 0 24 24" fill="none" stroke="#ffffff" stroke-width="1.45" stroke-linecap="round" stroke-linejoin="round"><g color="#ffffff"><path d="M3.500 19V6.500A1.500 1.500 0 0 1 5 5h4.500l2 2.500H19A1.500 1.500 0 0 1 20.500 9v1.500M3.500 19l2.300-7.400a1.500 1.500 0 0 1 1.400-1.100h13.300a1 1 0 0 1 1 1.300L19.600 18a1.500 1.500 0 0 1-1.400 1z"/></g></svg>
<svg style="left:49.9px;top:369.5px;opacity:0.8;" width="21" height="21" viewBox="0 0 24 24" fill="none" stroke="#ffffff" stroke-width="1.45" stroke-linecap="round" stroke-linejoin="round"><g color="#ffffff"><circle cx="12" cy="12" r="8.800"/><path d="M9.300 20.300v-3.500c-1-.6-2-1.700-2-3.300 0-1 .3-1.700.8-2.300-.2-.7-.2-1.500.1-2.400 1 0 1.800.4 2.500 1 .9-.2 1.800-.2 2.600 0 .7-.6 1.500-1 2.500-1 .3.900.3 1.700.1 2.400.5.600.8 1.300.8 2.300 0 1.600-1 2.700-2 3.300v3.500z" fill="currentColor" stroke="none"/></g></svg>
<svg style="left:49.9px;top:400.9px;opacity:0.8;" width="21" height="21" viewBox="0 0 24 24" fill="none" stroke="#ffffff" stroke-width="1.45" stroke-linecap="round" stroke-linejoin="round"><g color="#ffffff"><path d="M8.500 20.300a9 9 0 1 1 7 0"/><path d="M12 21.500V10M7.800 13.800L12 9.600l4.200 4.200"/></g></svg>
<svg style="left:49.15px;top:146.55px;" width="22.5" height="22.5" viewBox="0 0 24 24" fill="none" stroke="#ffffff" stroke-width="1.5" stroke-linecap="round" stroke-linejoin="round"><g color="#ffffff"><path d="M5 10C5 7.200 7.500 5.600 12 5.600s7 1.600 7 4.400v5c0 2.200-1.700 3.600-4 3.600H9c-2.300 0-4-1.400-4-3.600z"/><circle cx="9" cy="10.800" r="2.100"/><circle cx="15" cy="10.800" r="2.100"/><path d="M11.100 10.600h1.800M6.900 10.400L4 9.800M17.100 10.400l2.900-.6M10.600 15.600h2.800"/></g></svg>
<svg style="left:51.3px;top:1028.7px;opacity:0.8;" width="18.2" height="18.2" viewBox="0 0 24 24" fill="none" stroke="#ffffff" stroke-width="1.4" stroke-linecap="round" stroke-linejoin="round"><g color="#ffffff"><circle cx="12" cy="12" r="8.800"/><circle cx="12" cy="9.800" r="2.800" fill="currentColor" stroke="none"/><path d="M6.800 17.600c.8-2.400 2.800-3.500 5.200-3.500s4.400 1.100 5.200 3.500c-1.400 1.500-3.200 2.300-5.200 2.300s-3.800-.8-5.200-2.300z" fill="currentColor" stroke="none"/></g></svg>
<svg style="left:51.65px;top:1061.05px;opacity:0.8;" width="17.5" height="17.5" viewBox="0 0 24 24" fill="none" stroke="#ffffff" stroke-width="1.5" stroke-linecap="round" stroke-linejoin="round"><g color="#ffffff"><path d="M18.86 12.77 L20.94 14.15 L19.85 16.80 L17.40 16.30 L16.30 17.40 L16.80 19.85 L14.15 20.94 L12.77 18.86 L11.23 18.86 L9.85 20.94 L7.20 19.85 L7.70 17.40 L6.60 16.30 L4.15 16.80 L3.06 14.15 L5.14 12.77 L5.14 11.23 L3.06 9.85 L4.15 7.20 L6.60 7.70 L7.70 6.60 L7.20 4.15 L9.85 3.06 L11.23 5.14 L12.77 5.14 L14.15 3.06 L16.80 4.15 L16.30 6.60 L17.40 7.70 L19.85 7.20 L20.94 9.85 L18.86 11.23z"/><circle cx="12" cy="12" r="2.600"/></g></svg>
<div style="left:60.4px;top:189.3px;width:10.2px;height:10.2px;background:#d6101f;border-radius:50%;"></div>
<span class="t" style="left:63.7px;top:190.16px;font:700 6.2px/8.68px 'Liberation Sans',sans-serif;color:#fff;">8</span>
<div style="left:60.4px;top:285.29999999999995px;width:10.2px;height:10.2px;background:#d6101f;border-radius:50%;"></div>
<span class="t" style="left:63.7px;top:286.16px;font:700 6.2px/8.68px 'Liberation Sans',sans-serif;color:#fff;">1</span>
<svg style="left:627.6px;top:83.9px;" width="10.4" height="10.4" viewBox="0 0 16 16" fill="none" stroke="#3c3c3c" stroke-width="1.05" stroke-linecap="round" stroke-linejoin="round"><g color="#3c3c3c"><path d="M8 2.5v11M2.5 8h11"/></g></svg>
<svg style="left:640.65px;top:86.05px;" width="6.5" height="6.5" viewBox="0 0 16 16" fill="none" stroke="#555" stroke-width="1.4" stroke-linecap="round" stroke-linejoin="round"><g color="#555"><path d="M3.2 5.8L8 10.6l4.8-4.8"/></g></svg>
<svg style="left:653.7px;top:83.9px;" width="10.4" height="10.4" viewBox="0 0 16 16" fill="none" stroke="#3c3c3c" stroke-width="1.0" stroke-linecap="round" stroke-linejoin="round"><g color="#3c3c3c"><path d="M2.6 8a5.6 5.6 0 1 0 1.8-4.1M2.2 2.2v2.6h2.6M8 5v3.3l2.2 1.3"/></g></svg>
<svg style="left:670.7px;top:83.6px;" width="11" height="11" viewBox="0 0 16 16" fill="none" stroke="#3c3c3c" stroke-width="0.95" stroke-linecap="round" stroke-linejoin="round"><g color="#3c3c3c"><path d="M12.32 6.75 L14.33 7.05 L14.33 8.95 L12.32 9.25 L11.94 10.18 L13.15 11.81 L11.81 13.15 L10.18 11.94 L9.25 12.32 L8.95 14.33 L7.05 14.33 L6.75 12.32 L5.82 11.94 L4.19 13.15 L2.85 11.81 L4.06 10.18 L3.68 9.25 L1.67 8.95 L1.67 7.05 L3.68 6.75 L4.06 5.82 L2.85 4.19 L4.19 2.85 L5.82 4.06 L6.75 3.68 L7.05 1.67 L8.95 1.67 L9.25 3.68 L10.18 4.06 L11.81 2.85 L13.15 4.19 L11.94 5.82z"/><circle cx="8" cy="8" r="1.9"/></g></svg>
<svg style="left:688.2px;top:84.1px;" width="10" height="10" viewBox="0 0 16 16" fill="none" stroke="#3c3c3c" stroke-width="1.0" stroke-linecap="round" stroke-linejoin="round"><g color="#3c3c3c"><g fill="currentColor" stroke="none"><circle cx="3.5" cy="8" r="1.05"/><circle cx="8" cy="8" r="1.05"/><circle cx="12.5" cy="8" r="1.05"/></g></g></svg>
<svg style="left:687.3px;top:102.6px;" width="12" height="12" viewBox="0 0 16 16" fill="none" stroke="#3c3c3c" stroke-width="1.0" stroke-linecap="round" stroke-linejoin="round"><g color="#3c3c3c"><rect x="1.8" y="2.2" width="12.4" height="11.6" rx="1.8"/><path d="M6 2.2v11.6"/></g></svg>
<svg style="left:655.1px;top:170.7px" width="9" height="9" viewBox="0 0 16 16"><ellipse cx="7" cy="7" rx="6.200" ry="4.300" fill="none" stroke="#a6abb3" stroke-width="2.200"/><path d="M6.200 4.600h4.200c2 0 3 .9 3 2.300 0 1.100-.7 1.900-1.700 2.200l2.400 4.300h-2.600l-2-3.900H8.600v3.900H6.200zM8.600 6.300v1.900h1.500c.7 0 1.100-.4 1.100-1s-.4-.9-1.100-.9z" fill="#2366b8"/></svg>
<svg style="left:86.85px;top:189.45px;" width="24.5" height="24.5" viewBox="0 0 24 24" fill="none" stroke="#2b2b2b" stroke-width="1.5" stroke-linecap="round" stroke-linejoin="round"><g color="#2b2b2b"><path d="M5 10C5 7.200 7.500 5.600 12 5.600s7 1.600 7 4.400v5c0 2.200-1.700 3.600-4 3.600H9c-2.300 0-4-1.400-4-3.600z"/><circle cx="9" cy="10.800" r="2.100"/><circle cx="15" cy="10.800" r="2.100"/><path d="M11.100 10.600h1.800M6.900 10.400L4 9.800M17.100 10.400l2.900-.6M10.600 15.600h2.800"/></g></svg>
<svg style="left:91.5px;top:222.2px;" width="6.8" height="6.8" viewBox="0 0 16 16" fill="none" stroke="#555" stroke-width="1.7" stroke-linecap="round" stroke-linejoin="round"><g color="#555"><path d="M5.8 3l5 5-5 5"/></g></svg>
<svg style="left:90.8px;top:267.0px;" width="7.4" height="7.4" viewBox="0 0 16 16" fill="none" stroke="#555" stroke-width="1.65" stroke-linecap="round" stroke-linejoin="round"><g color="#555"><path d="M2.8 8.6l3.2 3.2 7-7.4"/></g></svg>
<svg style="left:90.8px;top:313.0px;" width="7.4" height="7.4" viewBox="0 0 16 16" fill="none" stroke="#555" stroke-width="1.65" stroke-linecap="round" stroke-linejoin="round"><g color="#555"><path d="M2.8 8.6l3.2 3.2 7-7.4"/></g></svg>
<svg style="left:90.8px;top:384.5px;" width="7.4" height="7.4" viewBox="0 0 16 16" fill="none" stroke="#555" stroke-width="1.65" stroke-linecap="round" stroke-linejoin="round"><g color="#555"><path d="M2.8 8.6l3.2 3.2 7-7.4"/></g></svg>
<svg style="left:93.4px;top:289.6px" width="5.2" height="5.2" viewBox="0 0 16 16"><ellipse cx="7.500" cy="7.500" rx="7" ry="5" fill="#5a9cc0"/><path d="M6 5h4.500c1.700 0 2.500.8 2.500 2 0 .9-.5 1.600-1.400 1.900l2.400 4.600h-3l-1.800-4.200H8.800v4.200H6z" fill="#3d84ab"/><ellipse cx="7" cy="7" rx="2.600" ry="1.500" fill="#f5f9fc"/></svg>
<svg style="left:134.1px;top:385.7px" width="5.2" height="5.2" viewBox="0 0 16 16"><ellipse cx="7.500" cy="7.500" rx="7" ry="5" fill="#5a9cc0"/><path d="M6 5h4.500c1.700 0 2.500.8 2.500 2 0 .9-.5 1.600-1.400 1.900l2.400 4.600h-3l-1.800-4.200H8.800v4.200H6z" fill="#3d84ab"/><ellipse cx="7" cy="7" rx="2.600" ry="1.500" fill="#f5f9fc"/></svg>
<svg style="left:90.3px;top:538.0px;" width="11" height="11" viewBox="0 0 16 16" fill="none" stroke="#3a3a3a" stroke-width="1.1" stroke-linecap="round" stroke-linejoin="round"><g color="#3a3a3a"><path d="M13 8a5 5 0 1 1-1.6-3.7M13.2 2.2v2.7h-2.7"/></g></svg>
<svg style="left:107.8px;top:538.0px;" width="11" height="11" viewBox="0 0 16 16" fill="none" stroke="#3a3a3a" stroke-width="1.1" stroke-linecap="round" stroke-linejoin="round"><g color="#3a3a3a"><path d="M3 3v3.6h3.6M3.4 6.4A5 5 0 0 1 12.6 7.6c.3 2.6-1.8 4.9-5.6 6"/></g></svg>
<svg style="left:124.6px;top:538.0px;" width="11" height="11" viewBox="0 0 16 16" fill="none" stroke="#3a3a3a" stroke-width="1.1" stroke-linecap="round" stroke-linejoin="round"><g color="#3a3a3a"><path d="M5.2 7.2L7.6 2.4c1.1 0 1.8.8 1.6 2l-.4 2h3.6c.9 0 1.5.8 1.3 1.7l-.9 4.2c-.2.8-.8 1.3-1.6 1.3H5.2zM5.2 7.2H2.4v6.4h2.8"/></g></svg>
<svg style="left:142.0px;top:538.0px;" width="11" height="11" viewBox="0 0 16 16" fill="none" stroke="#3a3a3a" stroke-width="1.1" stroke-linecap="round" stroke-linejoin="round"><g color="#3a3a3a"><path d="M10.8 8.8L8.4 13.6c-1.1 0-1.8-.8-1.6-2l.4-2H3.6c-.9 0-1.5-.8-1.3-1.7l.9-4.2c.2-.8.8-1.3 1.6-1.3h6zM10.8 8.800h2.8V2.400h-2.8"/></g></svg>
<svg style="left:94.6px;top:1023.4px;" width="8" height="8" viewBox="0 0 16 16" fill="none" stroke="#444" stroke-width="1.2" stroke-linecap="round" stroke-linejoin="round"><g color="#444"><path d="M12.6 7.2l-4.7 4.7a2.5 2.5 0 0 1-3.6-3.6l5.2-5.2a1.7 1.7 0 0 1 2.4 2.4l-5 5a.8.8 0 0 1-1.2-1.2l4.4-4.4"/></g></svg>
<svg style="left:113.1px;top:1023.3px" width="9" height="9" viewBox="0 0 16 16"><ellipse cx="7" cy="7" rx="6.200" ry="4.300" fill="none" stroke="#a6abb3" stroke-width="2.200"/><path d="M6.200 4.600h4.200c2 0 3 .9 3 2.300 0 1.100-.7 1.900-1.700 2.200l2.400 4.300h-2.600l-2-3.900H8.600v3.900H6.200zM8.600 6.300v1.900h1.500c.7 0 1.100-.4 1.100-1s-.4-.9-1.100-.9z" fill="#2366b8"/></svg>
<svg style="left:207.95px;top:1023.85px;" width="7.5" height="7.5" viewBox="0 0 16 16" fill="none" stroke="#777" stroke-width="1.3" stroke-linecap="round" stroke-linejoin="round"><g color="#777"><path d="M1.5 8.6C3 5.8 5.300 4.400 8 4.400s5 1.400 6.500 4.200"/><circle cx="8" cy="8.800" r="2"/></g></svg>
<svg style="left:226.1px;top:1024.1px;" width="6.6" height="6.6" viewBox="0 0 16 16" fill="none" stroke="#555" stroke-width="1.5" stroke-linecap="round" stroke-linejoin="round"><g color="#555"><path d="M8 2.5v11M2.5 8h11"/></g></svg>
<svg style="left:238.0px;top:1024.8px" width="5.2" height="5.2" viewBox="0 0 16 16"><ellipse cx="7.500" cy="7.500" rx="7" ry="5" fill="#5a9cc0"/><path d="M6 5h4.500c1.700 0 2.500.8 2.500 2 0 .9-.5 1.600-1.400 1.900l2.400 4.600h-3l-1.800-4.200H8.800v4.200H6z" fill="#3d84ab"/><ellipse cx="7" cy="7" rx="2.600" ry="1.500" fill="#f5f9fc"/></svg>
<svg style="left:93.55px;top:1061.05px;" width="8.5" height="8.5" viewBox="0 0 16 16" fill="none" stroke="#444" stroke-width="1.2" stroke-linecap="round" stroke-linejoin="round"><g color="#444"><path d="M2.500 13.500l.700-3L11 2.700a1.300 1.300 0 0 1 1.900 0l.4.4a1.300 1.300 0 0 1 0 1.900L5.500 12.800z"/></g></svg>
<svg style="left:121.4px;top:1062.4px;" width="7" height="7" viewBox="0 0 16 16" fill="none" stroke="#444" stroke-width="1.5" stroke-linecap="round" stroke-linejoin="round"><g color="#444"><path d="M3.2 5.8L8 10.6l4.8-4.8"/></g></svg>
<svg style="left:138.3px;top:1059.8px" width="11" height="11" viewBox="0 0 16 16" stroke="#d9653b" stroke-width="1.050" stroke-linecap="round"><path d="M8.98 8.20L15.25 9.47"/><path d="M8.80 8.60L12.78 11.63"/><path d="M8.46 8.89L11.37 14.59"/><path d="M8.02 9.00L8.15 14.00"/><path d="M7.59 8.91L4.95 14.74"/><path d="M7.23 8.64L3.40 11.85"/><path d="M7.03 8.25L0.83 9.82"/><path d="M7.02 7.80L2.12 6.81"/><path d="M7.20 7.40L2.10 3.53"/><path d="M7.54 7.11L5.27 2.66"/><path d="M7.98 7.00L7.82 0.60"/><path d="M8.41 7.09L10.47 2.53"/><path d="M8.77 7.36L13.67 3.25"/><path d="M8.97 7.75L13.82 6.52"/></svg>
<svg style="left:220.1px;top:1062.4px;" width="7" height="7" viewBox="0 0 16 16" fill="none" stroke="#444" stroke-width="1.5" stroke-linecap="round" stroke-linejoin="round"><g color="#444"><path d="M3.2 5.8L8 10.6l4.8-4.8"/></g></svg>
<svg style="left:682.2px;top:1060.4px;" width="10" height="10" viewBox="0 0 16 16" fill="none" stroke="#bdbdbd" stroke-width="1.0" stroke-linecap="round" stroke-linejoin="round"><g color="#bdbdbd"><path d="M2.200 2.600L14 8 2.200 13.400 4 8zM4 8h5"/></g></svg>
<svg style="left:50.3px;top:1087.3px;" width="10" height="10" viewBox="0 0 16 16" fill="none" stroke="#333" stroke-width="1.35" stroke-linecap="round" stroke-linejoin="round"><g color="#333"><path d="M3.200 7.400l3.700 3.600-3.700 3.600M12.600 1.800l-3.700 3.600 3.700 3.600"/></g></svg>
<svg style="left:71.4px;top:1087.1px;" width="10.8" height="10.8" viewBox="0 0 16 16" fill="none" stroke="#333" stroke-width="1.1" stroke-linecap="round" stroke-linejoin="round"><g color="#333"><circle cx="4" cy="3.200" r="1.700"/><path d="M4 4.900v6"/><circle cx="4" cy="12.600" r="1.700"/><circle cx="11" cy="11.800" r="2.300" stroke-width="1.700"/><path d="M9.300 8.300a1.750 1.750 0 0 1 3.400 0"/></g></svg>
<svg style="left:109.2px;top:1086.9px;" width="11.2" height="11.2" viewBox="0 0 16 16" fill="none" stroke="#333" stroke-width="1.05" stroke-linecap="round" stroke-linejoin="round"><g color="#333"><path d="M2.900 9.400A5.200 5.200 0 0 1 11.600 4.300M12.100 1.700v2.900H9.200M13.100 6.600A5.200 5.200 0 0 1 4.400 11.700M3.900 14.300v-2.900h2.900"/></g></svg>
<svg style="left:131.1px;top:1087.5px;" width="10" height="10" viewBox="0 0 16 16" fill="none" stroke="#333" stroke-width="1.0" stroke-linecap="round" stroke-linejoin="round"><g color="#333"><circle cx="8" cy="8" r="6.200"/><path d="M5.600 5.600l4.800 4.800M10.400 5.600l-4.800 4.800"/></g></svg>
<svg style="left:150.8px;top:1087.3px;" width="10.4" height="10.4" viewBox="0 0 16 16" fill="none" stroke="#333" stroke-width="1.0" stroke-linecap="round" stroke-linejoin="round"><g color="#333"><path d="M8 2.200L14.400 13.600H1.600z"/><path d="M8 6.400v3.600M8 11.700v.2"/></g></svg>
<svg style="left:171.2px;top:1087.5px;" width="10" height="10" viewBox="0 0 16 16" fill="none" stroke="#333" stroke-width="1.0" stroke-linecap="round" stroke-linejoin="round"><g color="#333"><circle cx="8" cy="8" r="6.200"/><path d="M8 7.300v4M8 4.900v.2"/></g></svg>
<svg style="left:203.4px;top:1086.8px;" width="12" height="12" viewBox="0 0 16 16" fill="none" stroke="#333" stroke-width="1.0" stroke-linecap="round" stroke-linejoin="round"><g color="#333"><path d="M6.200 2.600L14 7.400 8.600 10.800M6.200 2.600v3"/><circle cx="4.800" cy="10.800" r="2.300"/><path d="M1.400 10.800h1.100M7.100 10.800h1.100M2.300 8.200l.900.900M7.300 8.200l-.9.900M2.300 13.400l.9-.9M7.300 13.400l-.9-.9"/></g></svg>
<svg style="left:1132.1px;top:1087.2px;" width="10.8" height="10.8" viewBox="0 0 16 16" fill="none" stroke="#444" stroke-width="1.15" stroke-linecap="round" stroke-linejoin="round"><g color="#444"><circle cx="6.8" cy="6.8" r="4.6"/><path d="M10.2 10.2L14.2 14.2M4.6 6.8h4.4"/></g></svg>
<span class="t" style="left:1289px;top:1087.64px;font:400 7.8px/10.92px 'Liberation Sans',sans-serif;color:#333;letter-spacing:0.507px;">{ }</span>
<svg style="left:1317.1px;top:1086.0px;" width="12" height="12" viewBox="0 0 16 16" fill="none" stroke="#2f2f2f" stroke-width="1.3" stroke-linecap="round" stroke-linejoin="round"><g color="#2f2f2f"><path d="M3 7.200c0-2.600 2-4.200 5-4.200s5 1.600 5 4.200v3.400c0 1.200-2 2.700-5 2.700s-5-1.500-5-2.700z"/><path d="M3 7.400c-.9.200-1.500.900-1.500 1.900s.6 1.600 1.500 1.800M13 7.400c.9.200 1.500.900 1.500 1.900s-.6 1.600-1.500 1.800"/><path d="M4.400 6.400c1.100-.9 2.500-.9 3.600 0 1.100-.9 2.500-.9 3.600 0"/><path d="M6.400 9.200v1.200M9.600 9.200v1.200"/></g></svg>
<svg style="left:1338.6px;top:1085.7px;" width="12" height="12" viewBox="0 0 16 16" fill="none" stroke="#2f2f2f" stroke-width="1.15" stroke-linecap="round" stroke-linejoin="round"><g color="#2f2f2f"><path d="M9.200 2.300A4.300 4.300 0 0 0 3.700 6.400v3L2.300 12h11.400l-1.400-2.600V8.600M6.300 12.200a1.700 1.700 0 0 0 3.400 0"/><circle cx="12.100" cy="4.300" r="2.500" fill="currentColor" stroke="none"/></g></svg>
<svg style="left:718.1px;top:85.7px;" width="9" height="9" viewBox="0 0 16 16" fill="none" stroke="#4a8db7" stroke-width="1.0" stroke-linecap="round" stroke-linejoin="round"><g color="#4a8db7"><path d="M4.400 2.200h2.400l1.200 1.600 1.200-1.600h2.400v5.400h2.600L8 14 1.800 7.600h2.600z" fill="currentColor" stroke="none"/></g></svg>
<svg style="left:809.0px;top:86.6px" width="7.4" height="7.4" viewBox="0 0 16 16"><ellipse cx="7.500" cy="7.500" rx="7" ry="5" fill="#5a9cc0"/><path d="M6 5h4.500c1.700 0 2.500.8 2.500 2 0 .9-.5 1.600-1.400 1.900l2.400 4.600h-3l-1.800-4.200H8.800v4.200H6z" fill="#3d84ab"/><ellipse cx="7" cy="7" rx="2.600" ry="1.500" fill="#f5f9fc"/></svg>
<svg style="left:915.7px;top:85.7px;" width="9.2" height="9.2" viewBox="0 0 16 16" fill="none" stroke="#3a3a3a" stroke-width="1.4" stroke-linecap="round" stroke-linejoin="round"><g color="#3a3a3a"><path d="M3.5 3.5l9 9M12.5 3.5l-9 9"/></g></svg>
<svg style="left:718.6px;top:105.1px;" width="10.4" height="10.4" viewBox="0 0 16 16" fill="none" stroke="#3c3c3c" stroke-width="1.0" stroke-linecap="round" stroke-linejoin="round"><g color="#3c3c3c"><path d="M4 2.600L13 8 4 13.400z"/></g></svg>
<svg style="left:732.5px;top:106.6px;" width="8" height="8" viewBox="0 0 16 16" fill="none" stroke="#3c3c3c" stroke-width="1.0" stroke-linecap="round" stroke-linejoin="round"><g color="#3c3c3c"><path d="M4.5 6.2h7L8 10.2z" fill="currentColor" stroke="none"/></g></svg>
<svg style="left:1284.0px;top:105.9px;" width="10.8" height="10.8" viewBox="0 0 16 16" fill="none" stroke="#3c3c3c" stroke-width="1.2" stroke-linecap="round" stroke-linejoin="round"><g color="#3c3c3c"><circle cx="3.600" cy="3.400" r="1.600"/><circle cx="12.400" cy="12.600" r="1.600"/><path d="M3.600 5v4.400a2 2 0 0 0 2 2h3.200M7.200 9.600l1.800 1.800-1.800 1.800M12.400 11V6.600a2 2 0 0 0-2-2H7.200M8.800 6.400L7 4.600l1.800-1.800"/></g></svg>
<svg style="left:1300.8px;top:105.6px;" width="11.4" height="11.4" viewBox="0 0 16 16" fill="none" stroke="#3c3c3c" stroke-width="1.15" stroke-linecap="round" stroke-linejoin="round"><g color="#3c3c3c"><rect x="2" y="2.4" width="12" height="11.2" rx="1.6"/><path d="M8 2.4v11.2"/></g></svg>
<svg style="left:1318.2px;top:105.8px;" width="10.8" height="10.8" viewBox="0 0 16 16" fill="none" stroke="#3c3c3c" stroke-width="1.2" stroke-linecap="round" stroke-linejoin="round"><g color="#3c3c3c"><path d="M8 3H3.500a1 1 0 0 0-1 1v8.500a1 1 0 0 0 1 1H12a1 1 0 0 0 1-1V8M9.600 2.400h4v4M13.400 2.600L7.600 8.400"/></g></svg>
<svg style="left:1336.2px;top:106.6px;" width="9.6" height="9.6" viewBox="0 0 16 16" fill="none" stroke="#3c3c3c" stroke-width="1.0" stroke-linecap="round" stroke-linejoin="round"><g color="#3c3c3c"><g fill="currentColor" stroke="none"><circle cx="3.5" cy="8" r="1.05"/><circle cx="8" cy="8" r="1.05"/><circle cx="12.5" cy="8" r="1.05"/></g></g></svg>
<svg style="left:727.3px;top:124.9px;" width="7.4" height="7.4" viewBox="0 0 16 16" fill="none" stroke="#555" stroke-width="1.4" stroke-linecap="round" stroke-linejoin="round"><g color="#555"><path d="M5.8 3l5 5-5 5"/></g></svg>
<svg style="left:738.8px;top:125.2px" width="7" height="7" viewBox="0 0 16 16"><ellipse cx="7.500" cy="7.500" rx="7" ry="5" fill="#5a9cc0"/><path d="M6 5h4.500c1.700 0 2.500.8 2.500 2 0 .9-.5 1.600-1.400 1.900l2.400 4.600h-3l-1.800-4.200H8.800v4.200H6z" fill="#3d84ab"/><ellipse cx="7" cy="7" rx="2.600" ry="1.500" fill="#f5f9fc"/></svg>
<svg style="left:834.7px;top:124.9px;" width="7.4" height="7.4" viewBox="0 0 16 16" fill="none" stroke="#555" stroke-width="1.4" stroke-linecap="round" stroke-linejoin="round"><g color="#555"><path d="M5.8 3l5 5-5 5"/></g></svg>
<svg style="left:1230.6px;top:853.8px;" width="10.4" height="10.4" viewBox="0 0 16 16" fill="none" stroke="#3c3c3c" stroke-width="1.05" stroke-linecap="round" stroke-linejoin="round"><g color="#3c3c3c"><path d="M8 2.5v11M2.5 8h11"/></g></svg>
<svg style="left:1243.95px;top:856.05px;" width="6.5" height="6.5" viewBox="0 0 16 16" fill="none" stroke="#555" stroke-width="1.4" stroke-linecap="round" stroke-linejoin="round"><g color="#555"><path d="M3.2 5.8L8 10.6l4.8-4.8"/></g></svg>
<div style="left:1257.8px;top:853.6px;width:1px;height:11px;background:#cfcfcf;"></div>
<svg style="left:1265.6px;top:853.8px;" width="10.4" height="10.4" viewBox="0 0 16 16" fill="none" stroke="#3c3c3c" stroke-width="1.05" stroke-linecap="round" stroke-linejoin="round"><g color="#3c3c3c"><path d="M2.600 6V3.600a1 1 0 0 1 1-1H6M10 2.600h2.400a1 1 0 0 1 1 1V6M13.400 10v2.400a1 1 0 0 1-1 1H10M6 13.400H3.600a1 1 0 0 1-1-1V10"/></g></svg>
<svg style="left:1282.95px;top:854.25px;" width="9.5" height="9.5" viewBox="0 0 16 16" fill="none" stroke="#3c3c3c" stroke-width="1.1" stroke-linecap="round" stroke-linejoin="round"><g color="#3c3c3c"><path d="M3 8h10"/></g></svg>
<svg style="left:1300.5px;top:854.2px;" width="9.6" height="9.6" viewBox="0 0 16 16" fill="none" stroke="#3c3c3c" stroke-width="1.35" stroke-linecap="round" stroke-linejoin="round"><g color="#3c3c3c"><path d="M3.5 3.5l9 9M12.5 3.5l-9 9"/></g></svg>
<svg style="left:1317.7px;top:853.9px;" width="10.2" height="10.2" viewBox="0 0 16 16" fill="none" stroke="#3c3c3c" stroke-width="1.05" stroke-linecap="round" stroke-linejoin="round"><g color="#3c3c3c"><rect x="2.600" y="5" width="8.400" height="8.400" rx="1.800"/><path d="M5.400 4.800c.1-1.200.8-2.200 2-2.200h3.800a2.200 2.200 0 0 1 2.200 2.200v3.800c0 1.200-1 1.900-2.200 2"/></g></svg>
<svg style="left:1334.9px;top:853.7px;" width="10.6" height="10.6" viewBox="0 0 16 16" fill="none" stroke="#3c3c3c" stroke-width="1.05" stroke-linecap="round" stroke-linejoin="round"><g color="#3c3c3c"><rect x="2.400" y="2.400" width="11.200" height="11.200" rx="2.400"/></g></svg>
<svg style="left:716.0px;top:874.8px;" width="10.4" height="10.4" viewBox="0 0 16 16" fill="none" stroke="#3c3c3c" stroke-width="0.95" stroke-linecap="round" stroke-linejoin="round"><g color="#3c3c3c"><path d="M1.7 12.8V3.4h4.3l1.5 1.7h6.8v7.7zM1.7 6.6h4.4l1.4-1.5"/></g></svg>
<svg style="left:1134.7px;top:874.3px;" width="11.4" height="11.4" viewBox="0 0 16 16" fill="none" stroke="#2f2f2f" stroke-width="1.5" stroke-linecap="round" stroke-linejoin="round"><g color="#2f2f2f"><path d="M13 8a5 5 0 1 1-1.6-3.7M13.2 2.2v2.7h-2.7"/></g></svg>
<svg style="left:1155.6px;top:874.8px;" width="10.6" height="10.6" viewBox="0 0 16 16" fill="none" stroke="#555" stroke-width="0.95" stroke-linecap="round" stroke-linejoin="round"><g color="#555"><circle cx="8" cy="8" r="6.200"/><path d="M8 7.300v4M8 4.900v.2"/></g></svg>
<svg style="left:1176.3px;top:874.7px;" width="10.8" height="10.8" viewBox="0 0 16 16" fill="none" stroke="#444" stroke-width="1.05" stroke-linecap="round" stroke-linejoin="round"><g color="#444"><path d="M2.600 9.400V6.600a2 2 0 0 1 2-2h6.600M9.400 2.400l2 2.200-2 2.200M13.400 6.600v2.800a2 2 0 0 1-2 2H4.800M6.600 13.600l-2-2.200 2-2.200"/></g></svg>
<svg style="left:1197.0px;top:875.0px;" width="10.4" height="10.4" viewBox="0 0 16 16" fill="none" stroke="#555" stroke-width="1.0" stroke-linecap="round" stroke-linejoin="round"><g color="#555"><path d="M5 4.400h8.400v8.200H2.600V6.800zM5 4.400v2.400H2.600M5.400 9.600h5.200"/></g></svg>
<svg style="left:1216.9px;top:874.7px;" width="10.6" height="10.6" viewBox="0 0 16 16" fill="none" stroke="#444" stroke-width="1.1" stroke-linecap="round" stroke-linejoin="round"><g color="#444"><path d="M2 2.400l3.600 3.600M5.600 2.400L2 6M8.400 3.400h5.400M8.400 6.200h5.400M3 9h10.800M3 11.800h10.800"/></g></svg>
<div style="left:1150.6px;top:874.5px;width:1px;height:11px;background:#dcdcdc;"></div>
<div style="left:1171.7px;top:874.5px;width:1px;height:11px;background:#dcdcdc;"></div>
<div style="left:1191.7px;top:874.5px;width:1px;height:11px;background:#dcdcdc;"></div>
<svg style="left:1244.8px;top:876.6px" width="9" height="9" viewBox="0 0 9 9"><circle cx="4.5" cy="4.500" r="3.050" fill="none" stroke="#43b48c" stroke-width="1.050"/></svg>
<svg style="left:1244.8px;top:896.3px" width="9" height="9" viewBox="0 0 9 9"><circle cx="4.5" cy="4.500" r="3.050" fill="none" stroke="#43b48c" stroke-width="1.050"/></svg>
<svg style="left:1258.1px;top:876.1px" width="10.8" height="10.8" viewBox="0 0 16 16"><path d="M7.900 1.200c-2.600 0-3.300.9-3.300 2.100v1.600h3.500v.6H3.300C1.900 5.500 1.100 6.600 1.100 8.300s.8 2.900 2.200 2.900h1.300V9.400c0-1.300 1.100-2.300 2.400-2.300h3.200c1.100 0 1.900-.9 1.900-2V3.300c0-1.200-1-2.100-4.200-2.100z" fill="#3776ab"/><circle cx="6" cy="3" r=".7" fill="#fff"/><path d="M8.100 14.800c2.600 0 3.300-.9 3.300-2.100v-1.600H7.900v-.6h4.800c1.400 0 2.200-1.100 2.200-2.800s-.8-2.900-2.200-2.900h-1.300v1.800c0 1.300-1.100 2.300-2.400 2.300H5.800c-1.100 0-1.900.9-1.900 2v1.800c0 1.200 1 2.100 4.200 2.100z" fill="#ffd43b"/><circle cx="10" cy="13" r=".7" fill="#fff"/></svg>
<svg style="left:1258.4px;top:896.3px" width="10.6" height="10.6" viewBox="0 0 16 16"><ellipse cx="7" cy="7" rx="6.200" ry="4.300" fill="none" stroke="#a6abb3" stroke-width="2.200"/><path d="M6.200 4.600h4.200c2 0 3 .9 3 2.300 0 1.100-.7 1.900-1.700 2.200l2.400 4.300h-2.600l-2-3.900H8.600v3.900H6.200zM8.600 6.300v1.900h1.500c.7 0 1.100-.4 1.100-1s-.4-.9-1.100-.9z" fill="#2366b8"/></svg>
<svg style="left:0;top:0;z-index:10" width="1400" height="1159" viewBox="0 0 1400 1159"><path fill="#000" fill-rule="evenodd" d="M0 0H1400V1159H0Z M55.8 29.8H1344.1A11.5 11.5 0 0 1 1355.6 41.3V1088.55A11.5 11.5 0 0 1 1344.1 1100.05H55.8A11.5 11.5 0 0 1 44.3 1088.55V41.3A11.5 11.5 0 0 1 55.8 29.8Z"/></svg>
</div></body></html>
